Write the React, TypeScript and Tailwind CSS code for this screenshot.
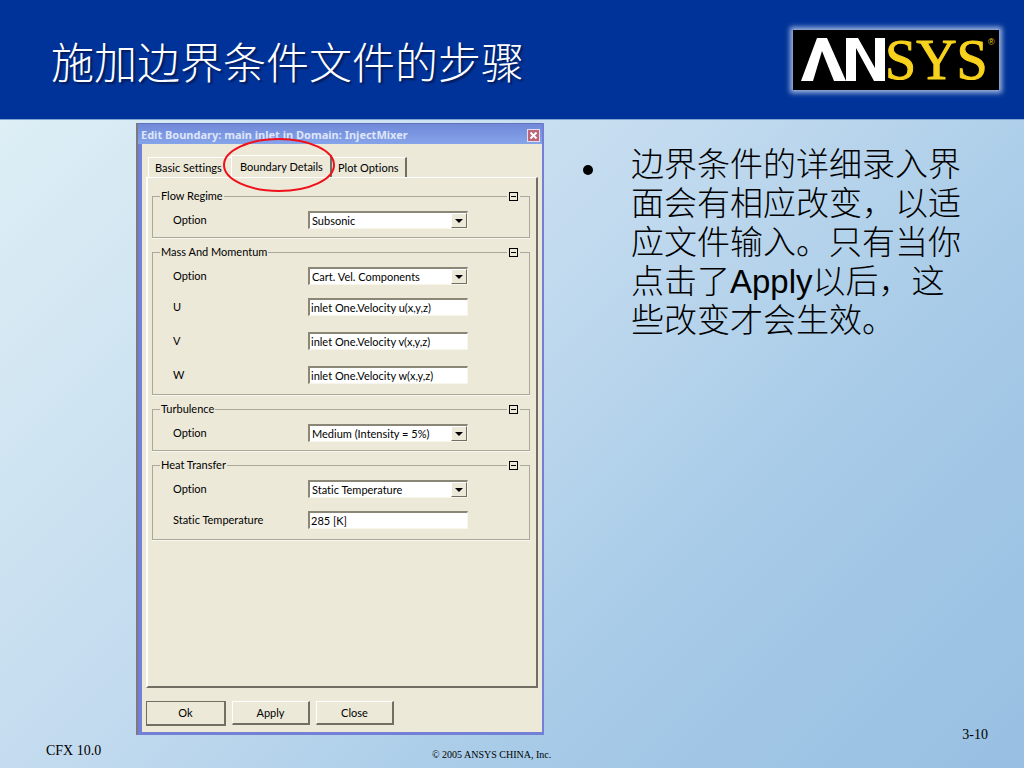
import React from 'react';

interface Field {
  id: string;
  label: string;
  value: string;
  kind: 'select' | 'text';
}

interface Group {
  title: string;
  fields: Field[];
}

const groups: Group[] = [
  {
    title: 'Flow Regime',
    fields: [{ id: 'flow', label: 'Option', value: 'Subsonic', kind: 'select' }],
  },
  {
    title: 'Mass And Momentum',
    fields: [
      { id: 'mass', label: 'Option', value: 'Cart. Vel. Components', kind: 'select' },
      { id: 'u', label: 'U', value: 'inlet One.Velocity u(x,y,z)', kind: 'text' },
      { id: 'v', label: 'V', value: 'inlet One.Velocity v(x,y,z)', kind: 'text' },
      { id: 'w', label: 'W', value: 'inlet One.Velocity w(x,y,z)', kind: 'text' },
    ],
  },
  {
    title: 'Turbulence',
    fields: [{ id: 'turb', label: 'Option', value: 'Medium (Intensity = 5%)', kind: 'select' }],
  },
  {
    title: 'Heat Transfer',
    fields: [
      { id: 'heat', label: 'Option', value: 'Static Temperature', kind: 'select' },
      { id: 'temp', label: 'Static Temperature', value: '285 [K]', kind: 'text' },
    ],
  },
];

const Logo = () => (
  <svg viewBox="0 0 206 60" className="w-[206px] h-[60px] shadow-[0_0_5px_3px_#9db4dd]" role="img" aria-label="ANSYS">
    <rect width="206" height="60" fill="#000" />
    <path d="M8 51 24 8H34L53 51H41L29 21 20 51Z" fill="#fff" />
    <path d="M53 51V8H65L82 38V8H92V51H81L63 18V51Z" fill="#fff" />
    <text x="92" y="49" fontFamily="Liberation Serif, serif" fontSize="56" fill="#f8d21c" stroke="#f8d21c" strokeWidth="1">SYS</text>
    <text x="195" y="15" fontFamily="Liberation Sans, sans-serif" fontSize="9" fill="#f8d21c">®</text>
  </svg>
);

const FieldRow: React.FC<{ field: Field }> = ({ field }) => (
  <div className={`flex items-center h-5 last:mb-0 ${field.kind === 'select' ? 'mb-[11px]' : 'mb-3.5'}`}>
    <label htmlFor={field.id} className="w-[135px] shrink-0">{field.label}</label>
    {field.kind === 'select' ? (
      <div className="relative w-40">
        <select
          id={field.id}
          className="block w-full h-[18px] pl-0.5 pr-5 leading-[14px] appearance-none bg-white border-2 border-r border-b border-t-[#8a8778] border-l-[#8a8778] border-b-[#f8f6ea] border-r-[#f8f6ea]"
        >
          <option>{field.value}</option>
        </select>
        <span className="absolute right-px top-0.5 w-4 h-[15px] flex items-center justify-center bg-[#ece9d8] border border-t-white border-l-white border-b-[#716f64] border-r-[#716f64] pointer-events-none">
          <svg width="8" height="4" viewBox="0 0 8 4"><path d="M0 0H8L4 4Z" fill="#000" /></svg>
        </span>
      </div>
    ) : (
      <input
        id={field.id}
        type="text"
        defaultValue={field.value}
        className="w-40 h-[18px] px-px bg-white border-2 border-r border-b border-t-[#8a8778] border-l-[#8a8778] border-b-[#f8f6ea] border-r-[#f8f6ea]"
      />
    )}
  </div>
);

const GroupBox: React.FC<{ group: Group }> = ({ group }) => (
  <section>
    <div className="flex items-center h-4">
      <span className="w-2 h-px bg-[#aca899]" />
      <h2 className="px-px">{group.title}</h2>
      <span className="flex-1 h-px bg-[#aca899]" />
      <button aria-label={`Collapse ${group.title}`} className="mx-0.5 w-[9px] h-[9px] border border-black flex items-center justify-center">
        <span className="w-[5px] h-px bg-black" />
      </button>
      <span className="w-2.5 h-px bg-[#aca899]" />
    </div>
    <div className={`-mt-2 pl-5 pt-3.5 border border-t-0 border-[#aca899] shadow-[0_1px_0_#faf8ee] ${group.fields.length > 1 ? 'pb-[9px]' : 'pb-[7px]'}`}>
      {group.fields.map(field => <FieldRow key={field.id} field={field} />)}
    </div>
  </section>
);

const BoundaryDialog = () => (
  <div className="border-l-2 border-[#7b7a80]">
    <div className="relative h-[612px] flex flex-col bg-[#ece9d8] border-l-4 border-r-2 border-b-[3px] border-[#7480d6] font-[Lato,sans-serif] [font-variant-ligatures:none] text-[11px] leading-4 text-black">
      <div className="h-[21px] pt-0.5 -ml-1 pl-[3px] flex items-center justify-between pr-0.5 border-t border-[#6273bd] bg-gradient-to-b from-[#7089d8] to-[#86a4ea] text-[#dfe6fa]">
        <h2 className="font-['Noto_Sans',sans-serif] font-bold text-[11px]">Edit Boundary: main inlet in Domain: InjectMixer</h2>
        <button aria-label="Close window" className="w-[13px] h-[13px] flex items-center justify-center bg-[#bd6579] border border-[#e5dced]">
          <svg width="7" height="7" viewBox="0 0 7 7"><path d="M0.5 0.5 6.5 6.5M6.5 0.5 0.5 6.5" stroke="#fff" strokeWidth="2" /></svg>
        </button>
      </div>
      <div className="flex items-end h-[33px] pl-1.5">
        <button className="h-5 w-[83px] pl-1.5 text-left border-t border-l border-white whitespace-nowrap">Basic Settings</button>
        <button className="h-[22px] w-[101px] pl-2 text-left border-t border-l border-white border-r-2 border-r-[#716f64] whitespace-nowrap">Boundary Details</button>
        <button className="h-5 w-[75px] pl-1.5 text-left border-t border-t-white border-r-2 border-r-[#716f64] whitespace-nowrap">Plot Options</button>
      </div>
      <div className="h-[511px] mx-1 pl-1 pr-1.5 pt-2.5 flex flex-col gap-1.5 border-t border-l-2 border-t-white border-l-white border-r-2 border-b-2 border-r-[#716f64] border-b-[#716f64]">
        {groups.map(group => <GroupBox key={group.title} group={group} />)}
      </div>
      <div className="flex gap-1.5 pl-1 pt-[13px]">
        <button className="w-20 h-[25px] border border-[#716f64] border-r-2 border-b-2">Ok</button>
        <button className="w-[78px] h-6 border border-t-white border-l-white border-r-2 border-b-2 border-r-[#716f64] border-b-[#716f64]">Apply</button>
        <button className="w-[78px] h-6 border border-t-white border-l-white border-r-2 border-b-2 border-r-[#716f64] border-b-[#716f64]">Close</button>
      </div>
      {/* red ring around the active tab */}
      <svg className="absolute left-20 top-[15px] w-[114px] h-[54px] pointer-events-none" viewBox="0 0 114 54">
        <ellipse cx="57" cy="27" rx="55" ry="26" fill="none" stroke="#f0101a" strokeWidth="2" />
      </svg>
    </div>
  </div>
);

export default function App() {
  return (
    <div className="min-h-screen flex flex-col bg-[linear-gradient(135deg,#e2f2f6_0%,#c3dbef_45%,#a6cae7_72%,#98bfe2_100%)] text-black">
      <header className="h-[120px] shrink-0 flex items-center justify-between pl-[51px] pr-[25px] bg-[#003399] border-b border-[#7fa3d6]">
        <h1 className="text-[43px] leading-[52px] font-light text-white font-['Noto_Sans_CJK_SC',sans-serif] [text-shadow:2px_2px_2px_#001a55]">施加边界条件文件的步骤</h1>
        <Logo />
      </header>
      <main className="flex-1 flex pt-[3px]">
        <div className="ml-[136px] w-[408px] shrink-0">
          <BoundaryDialog />
        </div>
        <ul className="flex-1 pl-[39px] pr-15 pt-[22px]">
          <li className="flex">
            <span className="mt-5 mr-[38px] w-2.5 h-2.5 shrink-0 rounded-full bg-black" />
            <p className="text-[33px] leading-[39px] font-light font-['Liberation_Sans','Noto_Sans_CJK_SC',sans-serif]">
              边界条件的详细录入界面会有相应改变，以适应文件输入。只有当你点击了Apply以后，这些改变才会生效。
            </p>
          </li>
        </ul>
      </main>
      <footer className="grid grid-cols-[386px_auto_1fr] h-[33px] pl-[46px] pr-9 font-['Liberation_Serif',serif] text-sm leading-4">
        <span className="pt-2">CFX 10.0</span>
        <span className="pt-3 text-[10px]">© 2005 ANSYS CHINA, Inc.</span>
        <span className="-mt-2 text-right">3-10</span>
      </footer>
    </div>
  );
}
